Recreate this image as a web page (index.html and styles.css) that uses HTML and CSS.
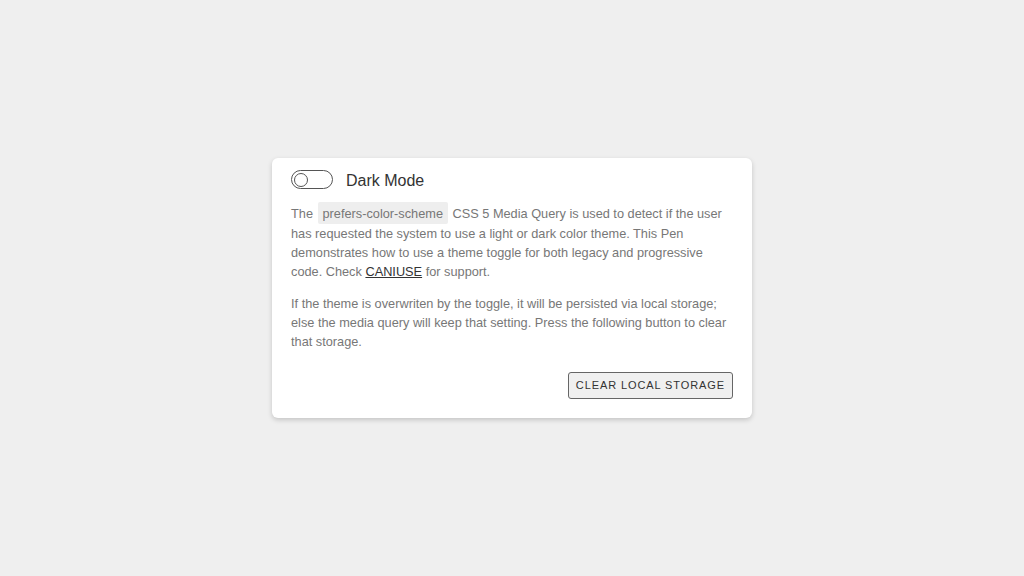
FILE: index.html
```html
<!DOCTYPE html>
<html lang="en">
<head>
<meta charset="utf-8">
<title>Dark Mode Toggle</title>
<link rel="stylesheet" href="styles.css">
</head>
<body>
<main class="card">
  <div class="header">
    <span class="toggle"><span class="knob"></span></span>
    <span class="label">Dark Mode</span>
  </div>
  <p class="text">The <code class="code">prefers-color-scheme</code> CSS 5 Media Query is used to detect if the user has requested the system to use a light or dark color theme. This Pen demonstrates how to use a theme toggle for both legacy and progressive code. Check <a class="link" href="#">CANIUSE</a> for support.</p>
  <p class="text">If the theme is overwriten by the toggle, it will be persisted via local storage; else the media query will keep that setting. Press the following button to clear that storage.</p>
  <div class="actions">
    <button class="btn" type="button">Clear local storage</button>
  </div>
</main>
</body>
</html>
```
FILE: styles.css
```css
html, body {
  margin: 0;
  height: 100%;
}
body {
  background: #efefef;
  font-family: "Liberation Sans", Arial, sans-serif;
  display: flex;
  align-items: center;
  justify-content: center;
}
.card {
  box-sizing: border-box;
  width: 480px;
  background: #fff;
  border-radius: 6px;
  box-shadow: 0 2px 5px rgba(0, 0, 0, 0.18);
  padding: 12px 19px 19px;
}
.header {
  display: flex;
  align-items: center;
  height: 19px;
}
.toggle {
  box-sizing: border-box;
  width: 42px;
  height: 19px;
  border: 1px solid #555;
  border-radius: 10px;
  display: flex;
  align-items: center;
  padding-left: 2px;
}
.knob {
  box-sizing: border-box;
  width: 14px;
  height: 14px;
  border: 1.5px solid #555;
  border-radius: 50%;
  background: #fff;
}
.label {
  margin-left: 13px;
  margin-top: 2px;
  font-size: 16px;
  color: #333;
  line-height: 19px;
}
.text {
  margin: 13px 0 0;
  font-size: 12.75px;
  line-height: 19px;
  color: #777;
}
.code {
  display: inline-block;
  font-family: "Liberation Sans", Arial, sans-serif;
  font-size: 12.75px;
  background: #eee;
  color: #777;
  padding: 1.5px 5px;
  margin: 0 1px;
  border-radius: 2px;
}
.link {
  color: #333;
  text-decoration: underline;
}
.actions {
  display: flex;
  justify-content: flex-end;
  margin-top: 21px;
}
.btn {
  font-family: "Liberation Sans", Arial, sans-serif;
  font-size: 11px;
  line-height: 15px;
  letter-spacing: 0.9px;
  text-transform: uppercase;
  color: #333;
  background: #f0f0f0;
  border: 1px solid #666;
  border-radius: 3px;
  padding: 5px 7px;
}
```
